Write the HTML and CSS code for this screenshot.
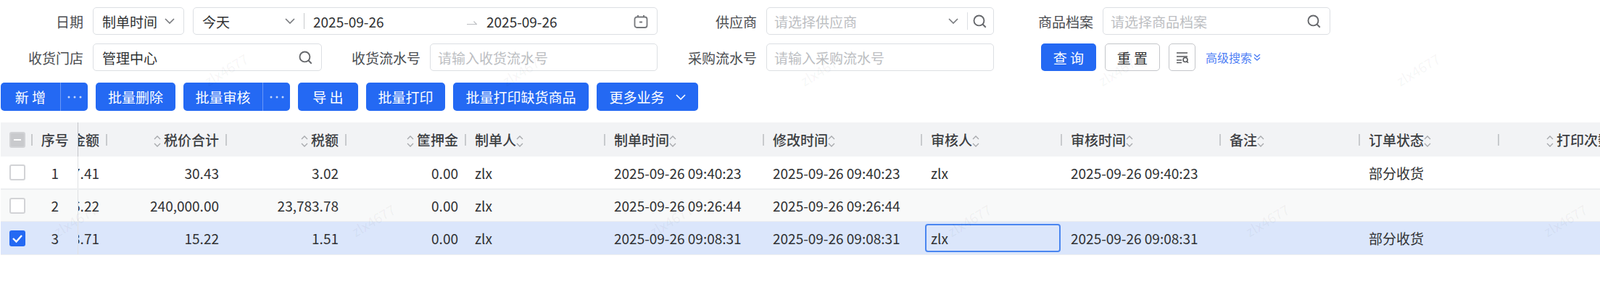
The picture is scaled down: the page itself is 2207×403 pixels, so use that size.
FILE: index.html
```html
<!DOCTYPE html>
<html>
  <head>
    <meta charset="UTF-8">
    <title>采购收货</title>
    <link rel="stylesheet" href="styles.css">
  </head>
  <body>
    <!-- shared icons -->
    <svg class="icon-defs" xmlns="http://www.w3.org/2000/svg">
      <symbol id="i-down" viewBox="0 0 14 8"><path d="M1 1l6 6 6-6" fill="none" stroke="currentColor" stroke-width="1.6"/></symbol>
      <symbol id="i-search" viewBox="0 0 18 18"><circle cx="8" cy="8" r="6.6" fill="none" stroke="currentColor" stroke-width="1.8"/><path d="M12.8 12.8l4 4" fill="none" stroke="currentColor" stroke-width="1.8"/></symbol>
      <symbol id="i-sort" viewBox="0 0 10 18"><path d="M1 6l4-4 4 4M1 12l4 4 4-4" fill="none" stroke="currentColor" stroke-width="1.3"/></symbol>
      <symbol id="i-dots" viewBox="0 0 20 4"><circle cx="2" cy="2" r="1.5" fill="currentColor"/><circle cx="10" cy="2" r="1.5" fill="currentColor"/><circle cx="18" cy="2" r="1.5" fill="currentColor"/></symbol>
    </svg>

    <form class="filters">
      <div class="filter-row">
        <label class="field-label w-128">日期</label>
        <div class="box w-126 gap-right">
          <span class="box-text">制单时间</span>
          <svg class="chevron"><use href="#i-down"/></svg>
        </div>
        <div class="box w-641 range">
          <div class="range-preset">
            <span class="box-text">今天</span>
            <svg class="chevron"><use href="#i-down"/></svg>
          </div>
          <span class="range-date">2025-09-26</span>
          <svg class="range-arrow" viewBox="0 0 14 6"><path d="M0 5.5h13.5L9.5 1.5" fill="none" stroke="currentColor" stroke-width="1.2"/></svg>
          <span class="range-date">2025-09-26</span>
          <svg class="calendar" viewBox="0 0 20 19"><path d="M6 1v3M14 1v3" stroke="currentColor" stroke-width="2"/><rect x="1.5" y="3.5" width="17" height="14.5" rx="3" fill="none" stroke="currentColor" stroke-width="1.8"/><path d="M8 10.500h4" stroke="currentColor" stroke-width="2"/></svg>
        </div>
        <label class="field-label w-150">供应商</label>
        <div class="box w-314">
          <span class="box-text placeholder">请选择供应商</span>
          <svg class="chevron"><use href="#i-down"/></svg>
          <span class="box-divider"></span>
          <svg class="search search-tight"><use href="#i-search"/></svg>
        </div>
        <label class="field-label w-150">商品档案</label>
        <div class="box w-314">
          <span class="box-text placeholder">请选择商品档案</span>
          <svg class="search"><use href="#i-search"/></svg>
        </div>
      </div>

      <div class="filter-row">
        <label class="field-label w-128">收货门店</label>
        <div class="box w-316">
          <span class="box-text">管理中心</span>
          <svg class="search"><use href="#i-search"/></svg>
        </div>
        <label class="field-label w-149">收货流水号</label>
        <div class="box w-314">
          <span class="box-text placeholder">请输入收货流水号</span>
        </div>
        <label class="field-label w-150">采购流水号</label>
        <div class="box w-314">
          <span class="box-text placeholder">请输入采购流水号</span>
        </div>
        <div class="filter-actions">
          <button type="button" class="btn btn-query">查 询</button>
          <button type="button" class="btn btn-plain">重 置</button>
          <button type="button" class="btn btn-plain btn-icon">
            <svg class="filter-icon" viewBox="0 0 22 18"><path d="M3 3h15M3 8h15M3 13h7M3 16.500h7" fill="none" stroke="currentColor" stroke-width="1.5"/><circle cx="15" cy="12.500" r="3" fill="none" stroke="currentColor" stroke-width="1.6"/><path d="M17 14.800l2 2" stroke="currentColor" stroke-width="1.6"/></svg>
          </button>
          <a class="advanced">高级搜索<svg class="double-down" viewBox="0 0 10 10"><path d="M1 1l4 3.500L9 1M1 5.500l4 3.500 4-3.500" fill="none" stroke="currentColor" stroke-width="1.5"/></svg></a>
        </div>
      </div>
    </form>

    <div class="toolbar">
      <div class="btn-group w-120">
        <button type="button" class="btn btn-main">新 增</button>
        <button type="button" class="btn btn-more"><svg class="dots"><use href="#i-dots"/></svg></button>
      </div>
      <button type="button" class="btn btn-bar w-110">批量删除</button>
      <div class="btn-group w-147">
        <button type="button" class="btn btn-main">批量审核</button>
        <button type="button" class="btn btn-more"><svg class="dots"><use href="#i-dots"/></svg></button>
      </div>
      <button type="button" class="btn btn-bar w-83">导 出</button>
      <button type="button" class="btn btn-bar w-109">批量打印</button>
      <button type="button" class="btn btn-bar w-187">批量打印缺货商品</button>
      <button type="button" class="btn btn-bar w-140">更多业务<svg class="chevron chevron-white"><use href="#i-down"/></svg></button>
    </div>

    <div class="table-wrap">
      <table class="grid">
        <colgroup>
          <col class="c-44"><col class="c-62"><col class="c-41"><col class="c-165"><col class="c-165"><col class="c-165">
          <col class="c-192"><col class="c-219"><col class="c-218"><col class="c-193"><col class="c-219"><col class="c-192"><col class="c-192"><col class="c-166">
        </colgroup>
        <thead>
          <tr>
            <th class="sep check-cell"><span class="check check-mixed"></span></th>
            <th class="center fixed-edge">序号</th>
            <th class="sep num clip-col"><div class="clip">不含税金额</div></th>
            <th class="sep num"><svg class="sort"><use href="#i-sort"/></svg>税价合计</th>
            <th class="sep num"><svg class="sort"><use href="#i-sort"/></svg>税额</th>
            <th class="sep num"><svg class="sort"><use href="#i-sort"/></svg>筐押金</th>
            <th class="sep">制单人<svg class="sort"><use href="#i-sort"/></svg></th>
            <th class="sep">制单时间<svg class="sort"><use href="#i-sort"/></svg></th>
            <th class="sep">修改时间<svg class="sort"><use href="#i-sort"/></svg></th>
            <th class="sep">审核人<svg class="sort"><use href="#i-sort"/></svg></th>
            <th class="sep">审核时间<svg class="sort"><use href="#i-sort"/></svg></th>
            <th class="sep">备注<svg class="sort"><use href="#i-sort"/></svg></th>
            <th class="sep">订单状态<svg class="sort"><use href="#i-sort"/></svg></th>
            <th class="num"><svg class="sort"><use href="#i-sort"/></svg>打印次数</th>
          </tr>
        </thead>
        <tbody>
          <tr class="row-first">
            <td class="check-cell"><span class="check"></span></td>
            <td class="center fixed-edge">1</td>
            <td class="num clip-col"><div class="clip">27.41</div></td>
            <td class="num">30.43</td>
            <td class="num">3.02</td>
            <td class="num">0.00</td>
            <td>zlx</td>
            <td>2025-09-26 09:40:23</td>
            <td>2025-09-26 09:40:23</td>
            <td>zlx</td>
            <td>2025-09-26 09:40:23</td>
            <td></td>
            <td>部分收货</td>
            <td></td>
          </tr>
          <tr class="row-striped">
            <td class="check-cell"><span class="check"></span></td>
            <td class="center fixed-edge">2</td>
            <td class="num clip-col"><div class="clip">216,216.22</div></td>
            <td class="num">240,000.00</td>
            <td class="num">23,783.78</td>
            <td class="num">0.00</td>
            <td>zlx</td>
            <td>2025-09-26 09:26:44</td>
            <td>2025-09-26 09:26:44</td>
            <td></td>
            <td></td>
            <td></td>
            <td></td>
            <td></td>
          </tr>
          <tr class="row-selected">
            <td class="check-cell"><span class="check check-on"><svg viewBox="0 0 22 22"><path d="M5 11l4.500 4.500L17 7" fill="none" stroke="#fff" stroke-width="2.400"/></svg></span></td>
            <td class="center fixed-edge">3</td>
            <td class="num clip-col"><div class="clip">13.71</div></td>
            <td class="num">15.22</td>
            <td class="num">1.51</td>
            <td class="num">0.00</td>
            <td>zlx</td>
            <td>2025-09-26 09:08:31</td>
            <td>2025-09-26 09:08:31</td>
            <td class="focus-cell"><div class="focus-box">zlx</div></td>
            <td>2025-09-26 09:08:31</td>
            <td></td>
            <td>部分收货</td>
            <td></td>
          </tr>
        </tbody>
      </table>
    </div>

    <!-- watermark -->
    <div class="wm-row wm-top">
      <span>zlx4677</span><span>zlx4677</span><span>zlx4677</span><span>zlx4677</span><span>zlx4677</span>
    </div>
    <div class="wm-row wm-bottom">
      <span>zlx4677</span><span>zlx4677</span><span>zlx4677</span><span>zlx4677</span><span>zlx4677</span><span>zlx4677</span>
    </div>
  </body>
</html>
```

FILE: styles.css
```css
body {
  font-family: "Noto Sans CJK SC", "Noto Sans", sans-serif;
  font-size: 19px;
  color: #303133;
  background-color: #fff;
  margin: 0;
  overflow: hidden;
  position: relative;
  height: 403px;
}
svg {
  flex: none;
}
.icon-defs {
  display: none;
}

/* filters */
.filters {
  padding-top: 10px;
  margin: 0;
}
.filter-row {
  display: flex;
  align-items: center;
  height: 38px;
  margin-bottom: 12px;
}
.field-label {
  text-align: right;
  padding-right: 13px;
  box-sizing: border-box;
  color: #4a4c50;
  flex: none;
  white-space: nowrap;
}
.w-128 { width: 128px; }
.w-149 { width: 149px; }
.w-150 { width: 150px; }
.box {
  display: flex;
  align-items: center;
  height: 38px;
  box-sizing: border-box;
  border: 1px solid #dcdfe3;
  border-radius: 5px;
  padding: 0 12px;
  background: #fff;
  flex: none;
}
.box-text {
  flex: 1;
  white-space: nowrap;
}
.placeholder {
  color: #bcbec2;
  margin-left: -2px;
}
.box.w-126 { width: 126px; }
.box.w-314 { width: 314px; }
.box.w-316 { width: 316px; }
.box.w-641 { width: 641px; }
.gap-right {
  margin-right: 12px;
}
.chevron {
  width: 14px;
  height: 8px;
  color: #77797d;
}
.chevron-white {
  color: #fff;
  margin-left: 15px;
}
.search {
  width: 19px;
  height: 19px;
  color: #66686c;
}
.search-tight {
  margin-right: -3px;
}
.box-divider {
  width: 1px;
  height: 24px;
  background: #dcdfe3;
  margin: 0 7px 0 12px;
}

/* date range */
.range-preset {
  display: flex;
  align-items: center;
  width: 141px;
  height: 22px;
  padding-right: 12px;
  box-sizing: border-box;
  border-right: 1px solid #c8cacd;
  flex: none;
}
.range-date {
  margin-left: 12px;
  width: 212px;
}
.range-arrow {
  width: 14px;
  height: 6px;
  color: #bcbec2;
  margin-right: 13px;
  margin-top: 3px;
}
.range-arrow + .range-date {
  margin-left: 0;
  width: 203px;
}
.calendar {
  width: 20px;
  height: 19px;
  color: #76787c;
}

/* buttons */
.btn {
  font-family: inherit;
  font-size: 19px;
  height: 38px;
  border: 0;
  border-radius: 5px;
  background: #2469f3;
  color: #fff;
  padding: 0;
  display: inline-flex;
  align-items: center;
  justify-content: center;
  flex: none;
  white-space: nowrap;
}
.filter-actions {
  display: flex;
  align-items: center;
  gap: 12px;
  margin-left: 65px;
}
.btn-query {
  width: 76px;
}
.btn-plain {
  width: 76px;
  background: #fff;
  color: #303133;
  border: 1px solid #c4c6ca;
}
.btn-icon {
  width: 37px;
}
.filter-icon {
  width: 22px;
  height: 18px;
  color: #54565a;
}
.advanced {
  color: #4f80f5;
  font-size: 16px;
  display: inline-flex;
  align-items: center;
  margin-left: 2px;
}
.double-down {
  width: 10px;
  height: 10px;
  margin-left: 2px;
}
.toolbar {
  display: flex;
  gap: 11px;
  padding-left: 1px;
  margin-top: 16px;
  height: 39px;
}
.toolbar .btn {
  height: 39px;
}
.btn-group {
  display: flex;
  flex: none;
}
.btn-group.w-120 { width: 120px; }
.btn-group.w-147 { width: 147px; }
.btn-bar.w-83 { width: 83px; }
.btn-bar.w-109 { width: 109px; }
.btn-bar.w-110 { width: 110px; }
.btn-bar.w-140 { width: 140px; }
.btn-bar.w-187 { width: 187px; }
.btn-main {
  flex: 1;
  border-radius: 5px 0 0 5px;
  border-right: 1px solid #6a98f6;
}
.btn-more {
  width: 37px;
  border-radius: 0 5px 5px 0;
}
.dots {
  width: 20px;
  height: 4px;
  color: #c5d7fb;
}

/* table */
.table-wrap {
  margin: 16px 0 0 1px;
  overflow: hidden;
}
.grid {
  border-collapse: collapse;
  table-layout: fixed;
  width: 2233px;
}
.c-41 { width: 41px; }
.c-44 { width: 44px; }
.c-62 { width: 62px; }
.c-165 { width: 165px; }
.c-166 { width: 166px; }
.c-192 { width: 192px; }
.c-193 { width: 193px; }
.c-218 { width: 218px; }
.c-219 { width: 219px; }
.grid th {
  height: 47px;
  background-color: #f2f3f5;
  font-weight: 500;
  color: #3c3e42;
  padding: 0 11px 0 12px;
  text-align: left;
  white-space: nowrap;
  overflow: hidden;
}
.grid th.sep {
  background-image: linear-gradient(#c8cacd, #c8cacd);
  background-repeat: no-repeat;
  background-position: right center;
  background-size: 2px 16px;
}
.grid td {
  height: 45px;
  padding: 0 11px 0 12px;
  white-space: nowrap;
  overflow: hidden;
  color: #303133;
  border-bottom: 1px solid #eceef0;
}
.row-first td {
  height: 44px;
  border-bottom-width: 2px;
}
.row-striped td {
  height: 43px;
  background-color: #f8f9f9;
}
.row-selected td {
  background-color: #dbe6fb;
}
.grid .num {
  text-align: right;
}
.grid .center {
  text-align: center;
  padding: 0;
}
.grid .check-cell {
  padding: 0 0 0 12px;
}
.grid .fixed-edge {
  border-right: 1px solid #dfe1e4;
}
.grid th.fixed-edge {
  border-right-color: #c4c6ca;
}
.grid .clip-col {
  padding-left: 0;
}
.clip {
  display: flex;
  justify-content: flex-end;
  overflow: hidden;
}
.sort {
  width: 10px;
  height: 18px;
  color: #a6a8ac;
  vertical-align: -3px;
  margin: 0 4px 0 0;
}
.check {
  display: block;
  width: 22px;
  height: 22px;
  box-sizing: border-box;
  border: 2px solid #d2d3d6;
  border-radius: 3px;
  background: #fff;
}
.check-mixed {
  background: #c9cacd;
  display: flex;
  align-items: center;
  justify-content: center;
}
.check-mixed::before {
  content: "";
  width: 10px;
  height: 2px;
  background: #fff;
}
.check-on {
  background: #2469f3;
  border: 0;
}
.check-on svg {
  display: block;
}
.grid td.focus-cell {
  padding: 0 2px 0 4px;
}
.focus-box {
  height: 39px;
  line-height: 35px;
  box-sizing: border-box;
  border: 2px solid #4a86f0;
  border-radius: 4px;
  padding-left: 6px;
}

/* watermark */
.wm-row {
  display: flex;
  position: absolute;
  left: 0;
  pointer-events: none;
}
.wm-row span {
  width: 411px;
  flex: none;
  text-align: center;
  color: rgba(0, 0, 0, 0.05);
  transform: rotate(-31deg);
}
.wm-top {
  top: 82px;
  padding-left: 106px;
}
.wm-bottom {
  top: 290px;
  margin-left: -102px;
}
```
